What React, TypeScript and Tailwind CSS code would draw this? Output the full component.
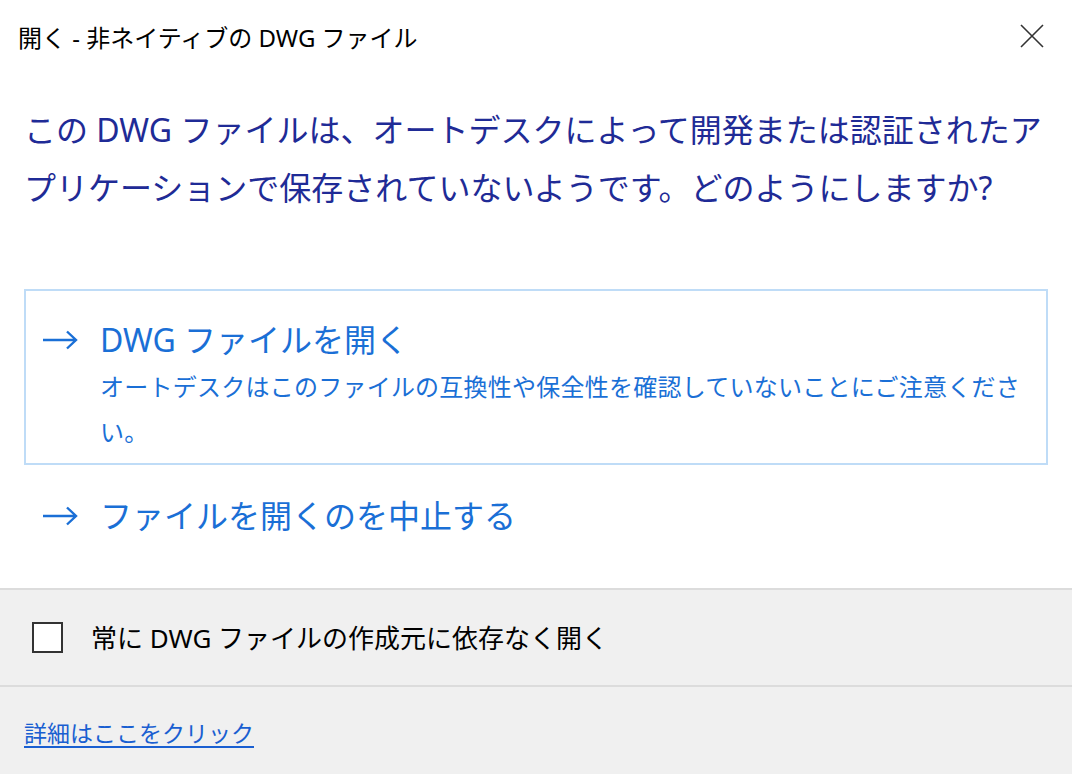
// 非ネイティブ DWG ファイルを開く確認ダイアログ

const FONT = "font-[family-name:'Noto_Sans','Noto_Sans_CJK_JP',sans-serif]";

function ArrowIcon() {
  return (
    <svg width="36" height="20" viewBox="0 0 36 20" fill="none" className="shrink-0">
      <path d="M1 10h33M25 1.5l9 8.5-9 8.5" stroke="#1a6fd6" strokeWidth="2.4" strokeLinejoin="miter" />
    </svg>
  );
}

function CloseIcon() {
  return (
    <svg width="24" height="24" viewBox="0 0 24 24" fill="none">
      <path d="M1 1l22 22M23 1L1 23" stroke="#333" strokeWidth="1.6" />
    </svg>
  );
}

interface CommandLinkProps {
  title: string;
  note?: string;
  focused?: boolean;
}

function CommandLink({ title, note, focused }: CommandLinkProps) {
  return (
    <button
      className={`mx-[24px] flex items-start gap-[22px] border-2 pl-[16px] pr-[18px] pt-[27px] text-left ${
        focused ? "border-[#bfdcf7] pb-[9px]" : "border-transparent pb-0"
      }`}
    >
      <div className="flex h-[44px] items-center">
        <ArrowIcon />
      </div>
      <div className="flex w-[928px] flex-col gap-[2px] text-[#1a6fd6]">
        <span className="text-[32px] leading-[44px]">{title}</span>
        {note && <span className="text-[24px] leading-[45px] tracking-[0.01em]">{note}</span>}
      </div>
    </button>
  );
}

export default function App() {
  return (
    <div className={`${FONT} flex h-[774px] w-[1072px] flex-col bg-white`}>
      {/* タイトルバー */}
      <div className="flex items-start justify-between pl-[18px] pr-[28px] pt-[22px]">
        <span className="text-[24px] leading-[32px] text-black">開く - 非ネイティブの DWG ファイル</span>
        <div className="mt-[2px]">
          <CloseIcon />
        </div>
      </div>

      {/* メイン説明 */}
      <p className="mt-[47px] px-[24px] text-[32px] leading-[58px] text-[#1f2b96]">
        この DWG ファイルは、オートデスクによって開発または認証されたアプリケーションで保存されていないようです。どのようにしますか?
      </p>

      {/* 選択肢 */}
      <div className="mt-[72px] flex flex-col">
        <CommandLink
          focused
          title="DWG ファイルを開く"
          note="オートデスクはこのファイルの互換性や保全性を確認していないことにご注意ください。"
        />
        <CommandLink title="ファイルを開くのを中止する" />
      </div>

      <div className="flex-1" />

      {/* チェックボックス */}
      <div className="flex h-[97px] items-center gap-[28px] border-t-2 border-[#dcdcdc] bg-[#f0f0f0] pl-[32px]">
        <span className="h-[31px] w-[31px] shrink-0 border-2 border-[#333] bg-white" />
        <span className="text-[26px] leading-[32px] text-black">常に DWG ファイルの作成元に依存なく開く</span>
      </div>

      {/* フッター */}
      <div className="h-[89px] border-t-2 border-[#dcdcdc] bg-[#f0f0f0] px-[24px] pt-[30px]">
        <a href="#" className="text-[23px] leading-[32px] text-[#1a5fd1] underline underline-offset-4">
          詳細はここをクリック
        </a>
      </div>
    </div>
  );
}
